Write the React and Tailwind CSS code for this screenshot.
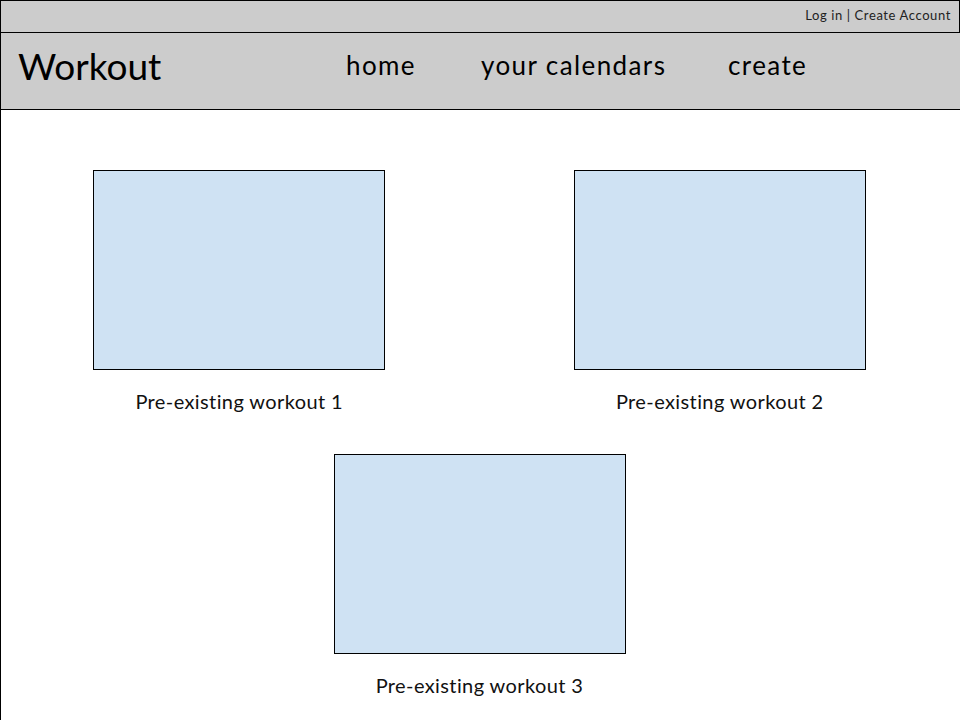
import React from "react";

const workouts = [
  { id: 1, label: "Pre-existing workout 1" },
  { id: 2, label: "Pre-existing workout 2" },
  { id: 3, label: "Pre-existing workout 3" },
];

function WorkoutCard({ label, className = "" }) {
  return (
    <div className={`flex flex-col items-center ${className}`}>
      <div className="w-[292px] h-[200px] bg-[#cfe2f3] border border-black" />
      <p className="mt-[19px] text-[20px] leading-[24px] tracking-[0.4px] text-[#111]">{label}</p>
    </div>
  );
}

export default function App() {
  return (
    <div className="w-[960px] h-[720px] bg-white border-l border-black overflow-hidden font-['Lato',sans-serif] text-black">
      {/* Top bar */}
      <div className="h-[33px] bg-[#cccccc] border-t border-r border-b border-black flex items-center justify-end pr-[8px] pb-[2px]">
        <span className="text-[13px] leading-none tracking-[0.6px] text-[#222]">Log in | Create Account</span>
      </div>

      {/* Nav */}
      <div className="h-[77px] bg-[#cccccc] border-b border-black flex items-center pb-[12px]">
        <div className="w-[345px] pl-[17px] text-[37px] leading-none">Workout</div>
        <nav className="flex items-center text-[26px] leading-none tracking-[1.4px]">
          <a className="w-[135px]">home</a>
          <a className="w-[247px]">your calendars</a>
          <a>create</a>
        </nav>
      </div>

      {/* Workouts */}
      <div className="grid grid-cols-2 pt-[60px] gap-y-[41px] -ml-[2px]">
        <WorkoutCard label={workouts[0].label} />
        <WorkoutCard label={workouts[1].label} />
        <WorkoutCard label={workouts[2].label} className="col-span-2" />
      </div>
    </div>
  );
}
